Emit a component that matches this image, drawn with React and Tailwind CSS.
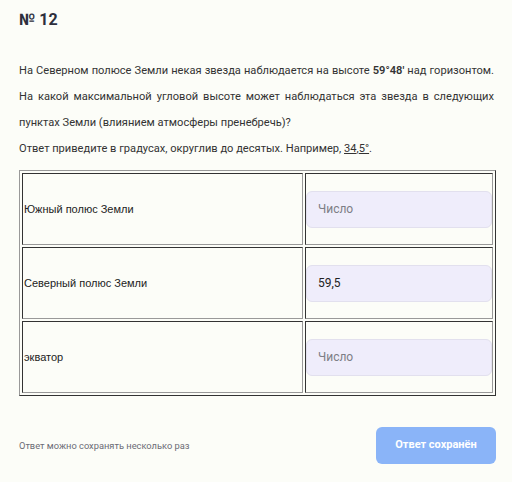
import React from "react";

function Cell({ children, className = "" }) {
  return (
    <td
      className={
        "border border-t-[#333] border-l-[#333] border-r-[#999] border-b-[#999] p-0 align-middle " +
        className
      }
    >
      {children}
    </td>
  );
}

function Field({ value }) {
  return (
    <div className="flex h-[37px] items-center rounded-[6px] border border-[#e2e0ee] bg-[#efedfb] px-[11px] text-[12px] font-['Roboto',sans-serif]">
      {value ? (
        <span className="text-[#222]">{value}</span>
      ) : (
        <span className="text-[#7d7d85]">Число</span>
      )}
    </div>
  );
}

export default function App() {
  const rows = [
    ["Южный полюс Земли", ""],
    ["Северный полюс Земли", "59,5"],
    ["экватор", ""],
  ];
  return (
    <div className="min-h-[482px] w-[512px] bg-[#fcfdf8] pl-[19px] pr-[16px] pt-[10px] font-['Roboto',sans-serif] text-[#333]">
      <h1 className="text-[16px] font-bold leading-[20px] text-[#2d2f3c]">№ 12</h1>
      <div className="mt-[28px] w-[475px] text-[11.1px] leading-[26px] text-[#333]">
        <p className="text-justify [text-align-last:left]">
          На Северном полюсе Земли некая звезда наблюдается на высоте{" "}
          <b className="font-semibold">59°48'</b> над горизонтом. На какой максимальной угловой высоте может
          наблюдаться эта звезда в следующих пунктах Земли (влиянием атмосферы пренебречь)?
        </p>
        <p>
          Ответ приведите в градусах, округлив до десятых. Например, <u>34</u>,<u>5°</u>.
        </p>
      </div>
      <table className="mt-[8px] w-[477px] border-separate border-spacing-[2px] border border-t-[#999] border-l-[#999] border-r-[#333] border-b-[#333] font-['Liberation_Sans',sans-serif] text-[11px] text-[#222]">
        <tbody>
          {rows.map(([label, val]) => (
            <tr key={label} className="h-[72px]">
              <Cell className="h-[72px] w-[281px] pl-[1px]">{label}</Cell>
              <Cell className="h-[72px] px-0">
                <Field value={val} />
              </Cell>
            </tr>
          ))}
        </tbody>
      </table>
      <div className="mt-[31px] flex items-center justify-between">
        <span className="text-[9.3px] text-[#6b6b75]">Ответ можно сохранять несколько раз</span>
        <button className="h-[37px] w-[120px] rounded-[6px] bg-[#8ab4f8] text-[11px] font-bold text-white">
          Ответ сохранён
        </button>
      </div>
    </div>
  );
}
